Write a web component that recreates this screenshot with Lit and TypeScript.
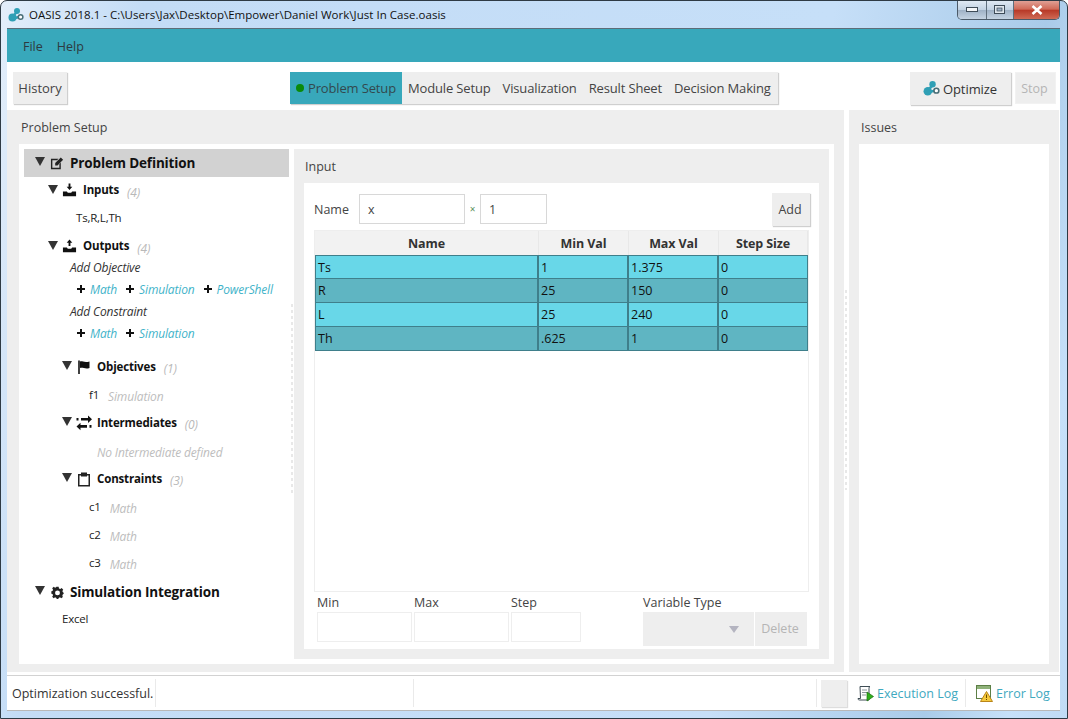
import { LitElement, html, css, svg } from "lit";
import { customElement } from "lit/decorators.js";

const logo = (size: number, c = "#2f9fb5") => html`<svg width=${size} height=${size} viewBox="0 0 16 16">
  <circle cx="4.5" cy="10.5" r="4" fill=${c}></circle>
  <circle cx="9" cy="4" r="3" fill=${c}></circle>
  <path d="M5 9 L9 5 M7 11 L11 10" stroke=${c} stroke-width="2.4"></path>
  <circle cx="12.6" cy="10" r="2.3" fill="#fff" stroke="#4a6f78" stroke-width="1.5"></circle>
</svg>`;

const tri = html`<svg class="tri" width="10" height="9" viewBox="0 0 10 9"><path d="M0 0H10L5 9Z" fill="#333"></path></svg>`;

const icons = {
  edit: svg`<path d="M1 3H9L7.5 4.5H2.5V12.5H10V8.5L11.5 7V14H1Z" fill="#222"></path><path d="M5.5 7.5L11.5 1.5L14 4L8 10H5.5Z" fill="#222"></path>`,
  input: svg`<path d="M7 0.5H9V4H11L8 7.5L5 4H7Z" fill="#111"></path><path d="M1 9H5.2L6.2 10.5H9.8L10.8 9H15V14H1Z" fill="#111"></path>`,
  output: svg`<path d="M8 0.5L11 4H9V7.5H7V4H5Z" fill="#111"></path><path d="M1 9H5.2L6.2 10.5H9.8L10.8 9H15V14H1Z" fill="#111"></path>`,
  flag: svg`<path d="M3 1.5V15" stroke="#111" stroke-width="1.6"></path><path d="M4 2.5C6 1.5 8 4 13.5 2.5V9C9 10.5 7 8 4 9Z" fill="#111"></path>`,
  swap: svg`<path d="M5 3H12V0.5L16 4.2L12 8V5.5H5Z" fill="#111"></path><path d="M11 10H4.5V7.8L0.5 11.5L4.5 15.2V12.8H11Z" fill="#111"></path><path d="M0.5 3H2.5V5.5H0.5ZM13.5 10H15.5V12.8H13.5Z" fill="#111"></path>`,
  clip: svg`<path fill-rule="evenodd" d="M2 3H5V1.5H11V3H14V15.5H2ZM3.5 4.5V14H12.5V4.5Z" fill="#222"></path><path d="M5 3H11V5.5H5Z" fill="#222"></path>`,
  gear: svg`<g transform="translate(1 1) scale(.875)"><path fill-rule="evenodd" d="M6.6 1H9.4L9.8 3L11.4 3.7L13.1 2.6L15 4.5L13.9 6.2L14.6 7.8L15.5 8.2V9.8L14.6 10.2L13.9 11.8L14.5 13.5L12.6 15L11 13.9L9.4 14.6L9 16H7L6.6 14.6L5 13.9L3.4 15L1.5 13.1L2.6 11.4L1.9 9.8L0.5 9.4V6.6L1.9 6.2L2.6 4.6L1.5 2.9L3.4 1L5 2.1L6.3 1.5ZM8 5.5A3 3 0 1 0 8 11.5A3 3 0 1 0 8 5.5Z" fill="#222"></path></g>`,
};
const icon = (k: keyof typeof icons) => html`<svg class="ic" width="16" height="16" viewBox="0 0 16 16">${icons[k]}</svg>`;
const plus = html`<svg class="plus" width="8" height="8" viewBox="0 0 8 8"><path d="M3 0H5V3H8V5H5V8H3V5H0V3H3Z" fill="#111"></path></svg>`;
const link = (t: string) => html`<span class="lnk">${plus}<i>${t}</i></span>`;

const rows = [
  ["Ts", "1", "1.375", "0"],
  ["R", "25", "150", "0"],
  ["L", "25", "240", "0"],
  ["Th", ".625", "1", "0"],
];

@customElement("app-root")
export class AppRoot extends LitElement {
  static styles = css`
    :host { display: block; position: relative; width: 1068px; height: 719px; overflow: hidden; font-family: "Open Sans", "Noto Sans", sans-serif; font-size: 13px; color: #333; }
    * { box-sizing: border-box; }
    .window { height: 719px; display: flex; flex-direction: column; padding: 0 7px 7px 6px; border-radius: 7px 7px 0 0; border: 1px solid #2e3a44;
      background: linear-gradient(100deg, #e3eefa 0, #c3dcf6 12%, #c6dff8 70%, #a9cbe9 88%, #c6e0f9 95%, #c0dbf5 100%); }
    .titlebar { height: 27px; display: flex; align-items: flex-start; flex: none; }
    .title { display: flex; align-items: center; gap: 5px; height: 26px; padding-left: 1px; font-size: 11.5px; color: #111; letter-spacing: 0.03px; flex: 1; white-space: nowrap; }
    .title svg { margin-top: 1px; }
    .ctl { display: flex; height: 19px; border: 1px solid #4b5a68; border-top: none; border-radius: 0 0 5px 5px; overflow: hidden; }
    .ctl div { display: flex; align-items: center; justify-content: center; border-left: 1px solid #5e6e7c; background: linear-gradient(#dfe9f3 0, #c2d2e2 48%, #9fb2c6 52%, #c4d3e2 100%); }
    .ctl div:first-child { width: 28px; border-left: none; }
    .ctl .max { width: 27px; }
    .ctl .close { width: 46px; background: linear-gradient(#e0a095 0, #d06a58 45%, #b83a28 52%, #cf6a55 100%); }
    .client { flex: 1; display: flex; flex-direction: column; background: #fff; border-top: 1px solid #5d6d78; min-height: 0; }
    .menubar { height: 33px; flex: none; background: #38a8bb; display: flex; align-items: center; gap: 14px; padding: 1px 16px 0; color: #2d3a40; font-size: 12.5px; }
    .toolbar { height: 48px; flex: none; display: grid; grid-template-columns: 277px 488px 1fr; align-items: start; padding: 10px 4px 0 6px; }
    .btn { display: inline-flex; align-items: center; justify-content: center; background: #eeeeee; height: 32px; box-shadow: 1px 1px 1px #cfcfcf; font-size: 13px; color: #444; }
    .hist { width: 54px; justify-self: start; }
    .tabs { display: flex; height: 32px; background: #eee; box-shadow: 1px 1px 1px #cfcfcf; width: 488px; letter-spacing: -0.15px; }
    .tab { flex: none; display: flex; align-items: center; justify-content: center; padding: 0 6px; white-space: nowrap; color: #444; }
    .tab.on { background: #38a8bb; width: 112px; padding: 0 0 0 6px; gap: 4px; justify-content: flex-start; color: #33484e; }
    .dot { width: 8px; height: 8px; border-radius: 50%; background: #0a8a0a; }
    .right { display: flex; justify-self: end; gap: 4px; }
    .opt { width: 101px; height: 33px; gap: 3px; color: #333; letter-spacing: -0.08px; padding-right: 1px; }
    .stop { width: 41px; color: #b5b5b5; box-shadow: none; border: 1px solid #f2f2f2; font-size: 12.5px; padding-right: 2px; }
    .main { flex: 1; min-height: 0; display: flex; gap: 5px; padding-right: 1px; }
    .panel { background: #eee; display: flex; flex-direction: column; }
    .pleft { width: 837px; padding: 0 10px 8px 12px; }
    .pright { flex: 1; padding: 0 10px 8px; }
    .ptitle { height: 34px; flex: none; display: flex; align-items: center; font-size: 12.5px; color: #444; padding-left: 2px; }
    .white { background: #fff; flex: 1; min-height: 0; }
    .split { display: flex; }
    .tree { width: 275px; flex: none; padding: 5px 5px 0; display: flex; flex-direction: column; color: #222; font-size: 11.5px; position: relative; }
    .r { height: 28px; flex: none; display: flex; align-items: center; white-space: nowrap; }
    .top { padding-left: 11px; font-size: 13.5px; font-weight: 700; color: #111; letter-spacing: -0.15px; }
    .top.sel { background: #d2d2d2; }
    .top.low { padding-top: 2px; }
    .top .tri { margin-right: 5px; margin-top: -3px; }
    .top .ic { margin-right: 5px; width: 15px; height: 15px; }
    .h1 { font-weight: 700; font-size: 11.5px; color: #111; letter-spacing: -0.15px; }
    .l1 { padding-left: 24px; }
    .l2 { padding-left: 38px; }
    .h1 .tri { margin-right: 4px; margin-top: -3px; }
    .l1 .ic { margin-right: 6px; margin-top: -2px; width: 15px; height: 15px; }
    .l2 .ic { margin-right: 5px; margin-top: -1px; }
    .h1 span { margin-top: -2px; }
    .l1 span { margin-top: -4px; }
    .cnt { font-weight: 400; font-style: italic; color: #b9b9b9; margin-left: 8px; padding-top: 2px; font-size: 12px; }
    .sub { height: 22px; flex: none; display: flex; align-items: center; font-style: italic; font-size: 12px; padding-left: 46px; white-space: nowrap; color: #333; letter-spacing: -0.15px; }
    .subs { margin-top: -5px; margin-bottom: 9px; display: flex; flex-direction: column; }
    .links { padding-left: 53px; gap: 9px; }
    .lnk { display: inline-flex; align-items: center; gap: 5px; }
    .lnk i { color: #3fb3c9; }
    .plain { letter-spacing: -0.2px; padding-bottom: 2px; }
    .plain.up { padding-bottom: 4px; }
    .t3 { padding-left: 65px; gap: 9px; }
    .t3 em { color: #bdbdbd; padding-top: 5px; font-size: 12px; letter-spacing: -0.15px; }
    .none { padding-left: 73px; color: #bdbdbd; font-style: italic; font-size: 12px; padding-top: 3px; letter-spacing: -0.15px; }
    .dash { position: absolute; left: 272px; top: 160px; width: 2px; height: 190px; background: repeating-linear-gradient(#e8e8e8 0 3px, transparent 3px 6px); }
    .dash2 { position: absolute; left: 845px; top: 290px; width: 2px; height: 200px; background: repeating-linear-gradient(#e8e8e8 0 3px, transparent 3px 6px); }
    .input { flex: 1; margin: 5px 5px 5px 0; background: #eee; padding: 0 10px 10px; display: flex; flex-direction: column; min-width: 0; }
    .input .ptitle { padding-left: 1px; }
    .ibody { flex: 1; background: #fff; min-height: 0; padding: 10px 9px 0 10px; display: flex; flex-direction: column; }
    .namerow { height: 37px; flex: none; display: flex; align-items: flex-start; font-size: 12.5px; color: #444; }
    .namerow label { width: 45px; height: 32px; display: flex; align-items: center; }
    .tf { height: 30px; margin-top: 1px; border: 1px solid #d8d8d8; display: flex; align-items: center; padding: 0 8px; color: #444; font-size: 12.5px; background: #fff; }
    .tf.a { width: 106px; }
    .tf.b { width: 67px; }
    .times { width: 15px; height: 32px; display: flex; align-items: center; justify-content: center; color: #5a8f5a; font-size: 10px; }
    .add { width: 38px; height: 33px; margin-left: auto; font-size: 12.5px; padding-right: 2px; }
    .table { height: 362px; flex: none; width: 495px; border: 1px solid #eeeeee; display: flex; flex-direction: column; }
    .hdr { display: grid; grid-template-columns: 224px 90px 90px 89px; height: 24px; background: #f2f2f2; flex: none; }
    .hdr div { display: flex; align-items: center; justify-content: center; font-weight: 700; font-size: 12.5px; color: #333; border-right: 1px solid #e8e8e8; letter-spacing: -0.1px; }
    .row { display: grid; grid-template-columns: 224px 90px 90px 89px; height: 24px; flex: none; }
    .row div { display: flex; align-items: center; padding: 0 0 0 2px; font-size: 12.5px; color: #111; border-bottom: 1px solid #3f7f8b; border-right: 2px solid #3f7f8b; }
    .row:nth-of-type(2) div { border-top: 1px solid #3f7f8b; }
    .row .l { border-left: 1px solid #3f7f8b; }
    .row div:last-child { border-right: 1px solid #3f7f8b; }
    .odd { background: #68d7e8; }
    .even { background: #5fb5c2; }
    .bottom { display: flex; margin-top: 4px; padding-left: 3px; font-size: 12.5px; color: #444; }
    .fld { display: flex; flex-direction: column; margin-right: 2px; }
    .fld span { height: 16px; display: flex; align-items: center; padding-bottom: 3px; white-space: nowrap; }
    .box { height: 30px; border: 1px solid #eee; background: #fff; }
    .w95 { width: 95px; }
    .w70 { width: 70px; }
    .vt { margin-left: 60px; margin-right: 1px; }
    .combo { width: 111px; height: 34px; background: #eee; display: flex; align-items: center; justify-content: flex-end; padding-right: 15px; }
    .del { width: 52px; height: 34px; background: #eee; color: #b5b5b5; display: flex; align-items: center; justify-content: center; font-size: 12.5px; margin-top: 16px; padding: 0 2px 1px 0; }
    .status { height: 36px; flex: none; border-top: 1px solid #d2d2d2; border-bottom: 1px solid #b8b8b8; margin-top: 3px; display: flex; align-items: center; font-size: 12.5px; color: #333; background: #fff; }
    .seg { height: 28px; display: flex; align-items: center; border-right: 1px solid #eaeaea; }
    .s1 { width: 149px; padding-left: 5px; white-space: nowrap; }
    .s2 { width: 258px; }
    .s3 { width: 403px; }
    .sq { width: 26px; height: 27px; background: #eee; box-shadow: 1px 1px 1px #ddd; margin-left: 4px; }
    .logbtn { display: flex; align-items: center; gap: 3px; color: #3fa9bf; white-space: nowrap; font-size: 12.5px; }
    .lb1 { margin-left: 10px; width: 109px; border-right: 1px solid #eaeaea; height: 28px; }
    .lb2 { margin-left: 10px; }
  `;

  render() {
    return html`<div class="window">
      <div class="titlebar">
        <div class="title">${logo(16)}<span>OASIS 2018.1 - C:\\Users\\Jax\\Desktop\\Empower\\Daniel Work\\Just In Case.oasis</span></div>
        <div class="ctl">
          <div><svg width="12" height="6" viewBox="0 0 12 6"><rect x="0.5" y="0.5" width="11" height="4" fill="#f4f6f8" stroke="#3e4c58"></rect></svg></div>
          <div class="max"><svg width="12" height="10" viewBox="0 0 12 10"><rect x="0.5" y="0.5" width="10" height="8" fill="#dfe7ee" stroke="#3e4c58"></rect><rect x="3" y="3" width="5" height="3" fill="#9fb2c6" stroke="#3e4c58" stroke-width="0.7"></rect></svg></div>
          <div class="close"><svg width="12" height="10" viewBox="0 0 12 10"><path d="M1.5 1L10.5 9M10.5 1L1.5 9" stroke="#fff" stroke-width="2.6"></path></svg></div>
        </div>
      </div>
      <div class="client">
        <div class="menubar"><span>File</span><span>Help</span></div>
        <div class="toolbar">
          <div class="btn hist">History</div>
          <div class="tabs">
            <div class="tab on"><span class="dot"></span>Problem Setup</div>
            <div class="tab">Module Setup</div>
            <div class="tab">Visualization</div>
            <div class="tab">Result Sheet</div>
            <div class="tab">Decision Making</div>
          </div>
          <div class="right">
            <div class="btn opt">${logo(17)}Optimize</div>
            <div class="btn stop">Stop</div>
          </div>
        </div>
        <div class="main">
          <div class="panel pleft">
            <div class="ptitle">Problem Setup</div>
            <div class="white split">
              <div class="tree">
                <div class="r top sel">${tri}${icon("edit")}Problem Definition</div>
                <div class="r h1 l1">${tri}${icon("input")}<span>Inputs</span><em class="cnt">(4)</em></div>
                <div class="r plain up" style="padding-left:52px">Ts,R,L,Th</div>
                <div class="r h1 l1">${tri}${icon("output")}<span>Outputs</span><em class="cnt">(4)</em></div>
                <div class="subs">
                  <div class="sub">Add Objective</div>
                  <div class="sub links">${link("Math")}${link("Simulation")}${link("PowerShell")}</div>
                  <div class="sub">Add Constraint</div>
                  <div class="sub links">${link("Math")}${link("Simulation")}</div>
                </div>
                <div class="r h1 l2">${tri}${icon("flag")}<span>Objectives</span><em class="cnt">(1)</em></div>
                <div class="r t3 plain"><span>f1</span><em>Simulation</em></div>
                <div class="r h1 l2">${tri}${icon("swap")}<span>Intermediates</span><em class="cnt">(0)</em></div>
                <div class="r none">No Intermediate defined</div>
                <div class="r h1 l2">${tri}${icon("clip")}<span>Constraints</span><em class="cnt">(3)</em></div>
                <div class="r t3 plain"><span>c1</span><em>Math</em></div>
                <div class="r t3 plain"><span>c2</span><em>Math</em></div>
                <div class="r t3 plain"><span>c3</span><em>Math</em></div>
                <div class="r top low">${tri}${icon("gear")}Simulation Integration</div>
                <div class="r plain" style="padding-left:38px">Excel</div>
                <div class="dash"></div>
              </div>
              <div class="input">
                <div class="ptitle">Input</div>
                <div class="ibody">
                  <div class="namerow">
                    <label>Name</label>
                    <div class="tf a">x</div>
                    <div class="times">×</div>
                    <div class="tf b">1</div>
                    <div class="btn add">Add</div>
                  </div>
                  <div class="table">
                    <div class="hdr"><div>Name</div><div>Min Val</div><div>Max Val</div><div>Step Size</div></div>
                    ${rows.map((r, i) => html`<div class="row ${i % 2 ? "even" : "odd"}">${r.map((c, j) => html`<div class=${j === 0 ? "l" : ""}>${c}</div>`)}</div>`)}
                  </div>
                  <div class="bottom">
                    <div class="fld"><span>Min</span><div class="box w95"></div></div>
                    <div class="fld"><span>Max</span><div class="box w95"></div></div>
                    <div class="fld"><span>Step</span><div class="box w70"></div></div>
                    <div class="fld vt"><span>Variable Type</span>
                      <div class="combo"><svg width="10" height="7" viewBox="0 0 10 7"><path d="M0 0H10L5 7Z" fill="#b4b4c0"></path></svg></div>
                    </div>
                    <div class="del">Delete</div>
                  </div>
                </div>
              </div>
            </div>
          </div>
          <div class="panel pright">
            <div class="ptitle">Issues</div>
            <div class="white"></div>
          </div>
        </div>
        <div class="status">
          <div class="seg s1">Optimization successful.</div>
          <div class="seg s2"></div>
          <div class="seg s3"></div>
          <div class="sq"></div>
          <div class="logbtn lb1">
            <svg width="17" height="17" viewBox="0 0 17 17"><path d="M3 1.5H13C12 2 12 3 12 4V15H2.5C1.5 15 1 14.5 1 13.5H3.5Z" fill="#fff" stroke="#3f4d55"></path><path d="M5 5H10M5 7.5H10M5 10H9" stroke="#8a959b"></path><path d="M10 7V16L16.5 11.5Z" fill="#2fb01c" stroke="#1b6f10" stroke-width="0.7"></path></svg>
            <span>Execution Log</span>
          </div>
          <div class="logbtn lb2">
            <svg width="17" height="17" viewBox="0 0 17 17"><rect x="0.5" y="0.5" width="14" height="13" fill="#fff" stroke="#5d7f46"></rect><rect x="1" y="1" width="13" height="3" fill="#8fb27a"></rect><path d="M10.5 6.5L16.5 16.5H4.5Z" fill="#f5c93c" stroke="#b9851a"></path><path d="M10.5 9.5V13M10.5 14V15" stroke="#6a4a00"></path></svg>
            <span>Error Log</span>
          </div>
        </div>
      </div>
    </div>
    <div class="dash2"></div>`;
  }
}
